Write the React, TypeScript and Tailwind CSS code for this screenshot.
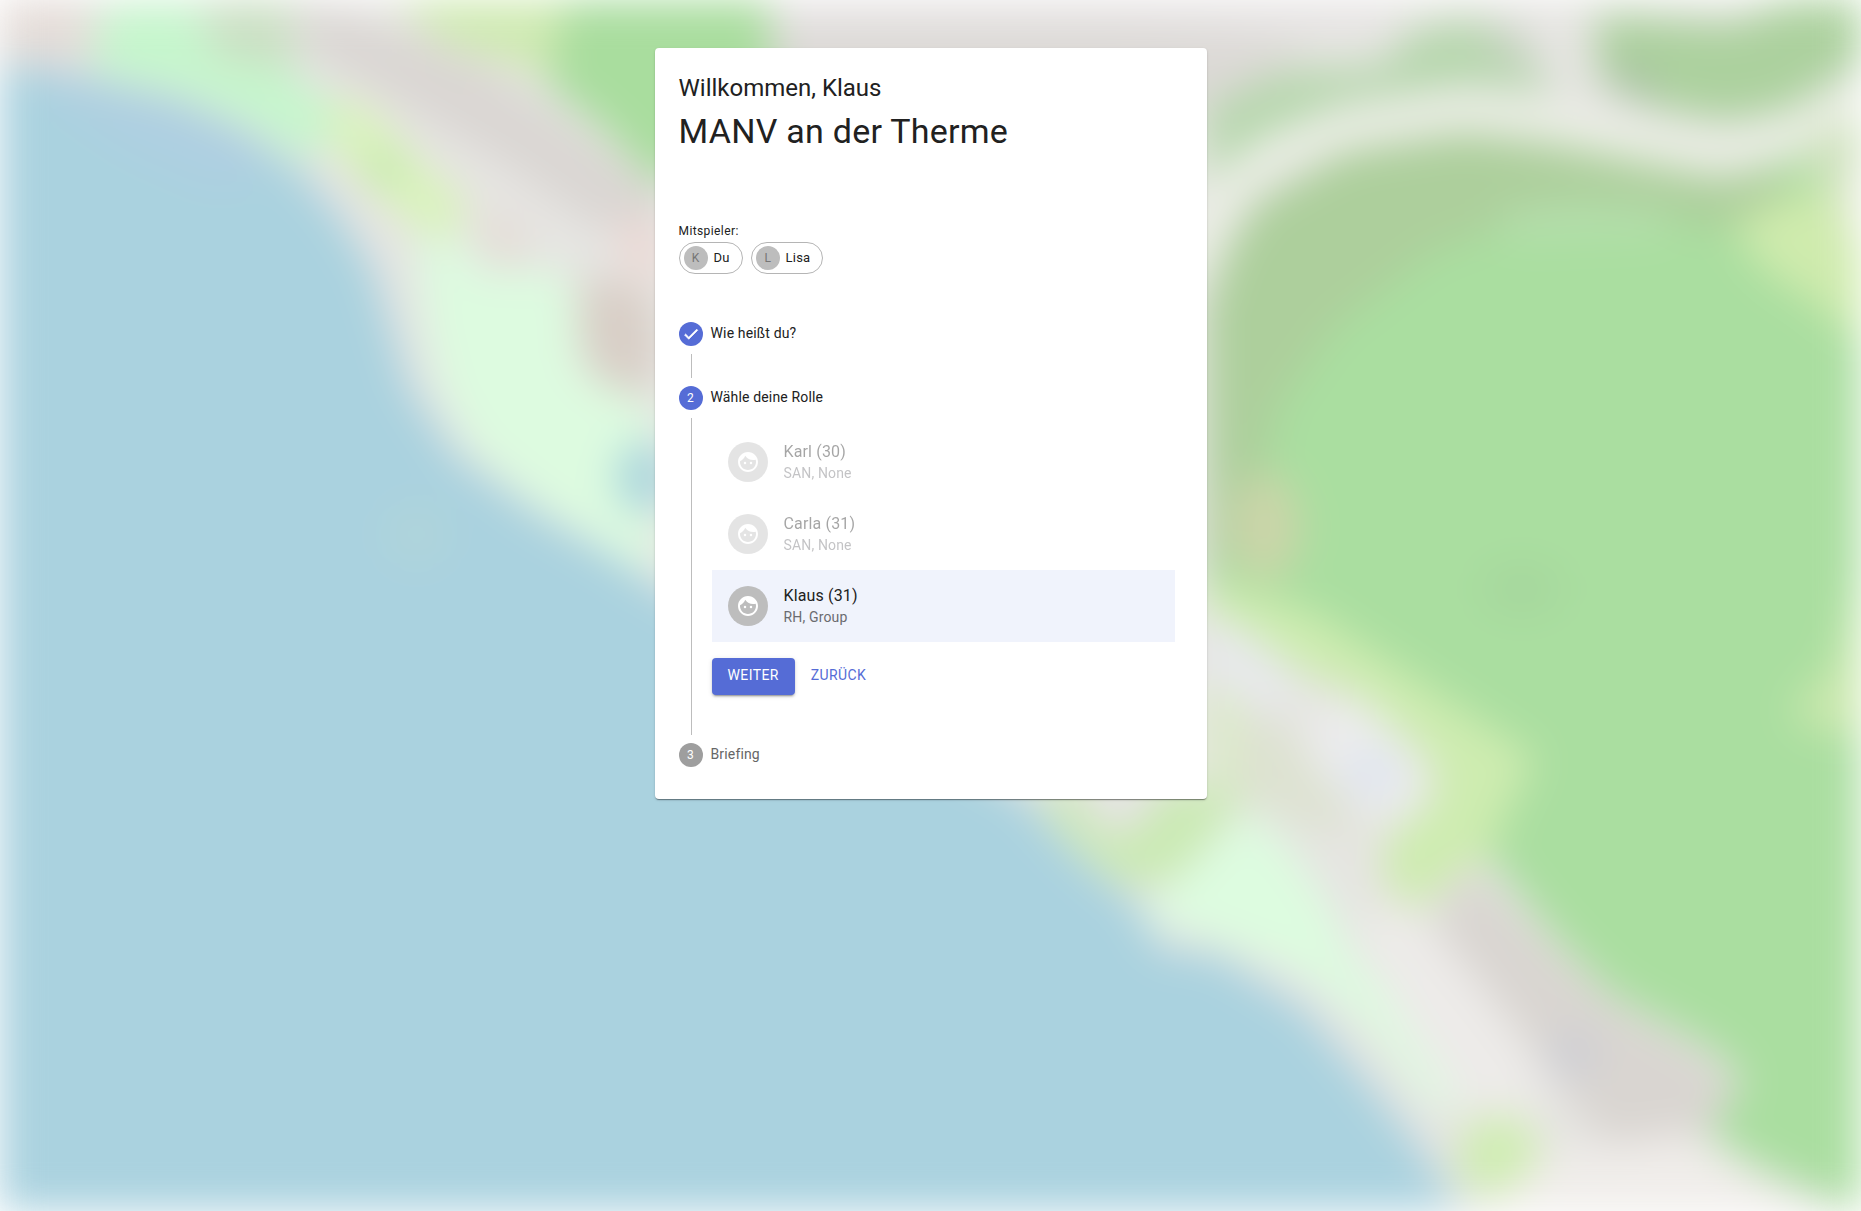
import { MdFace } from 'react-icons/md';

type Role = { name: string; detail: string; selected?: boolean };

const roles: Role[] = [
  { name: 'Karl (30)', detail: 'SAN, None' },
  { name: 'Carla (31)', detail: 'SAN, None' },
  { name: 'Klaus (31)', detail: 'RH, Group', selected: true },
];

function MapBackdrop() {
  return (
    <svg
      className="absolute inset-0 h-full w-full overflow-hidden blur-[20px]"
      viewBox="0 0 1568 1020"
      preserveAspectRatio="none"
      aria-hidden="true"
    >
      <rect width="1568" height="1020" fill="#e6e5e2" />
      {/* built-up area */}
      <path d="M0 0H75V52H0Z" fill="#e4dcd8" />
      <path d="M170 0H245L250 60L185 60Z" fill="#cbe0c4" />
      <path d="M250 0L330 25L400 52L552 155V205L500 190L425 138L345 92L262 45Z" fill="#dad6d3" />
      <path d="M520 180L552 190V245L530 225Z" fill="#efd6d2" />
      <path d="M650 20H880L1040 30L1110 40L1060 70L1010 100H650Z" fill="#dcd9d6" />
      <path d="M650 0H1170V24H650Z" fill="#e6e3e3" />
      <path d="M335 0H478L466 66L425 52L372 36Z" fill="#cfeab2" />
      <path d="M478 0H646L652 60L560 160L505 105L462 72Z" fill="#a9dd9e" />
      {/* water */}
      <path
        d="M0 54L75 65L150 87L212 115L254 145L286 182L315 228L330 278L345 327L384 384L454 434L522 473L552 494L862 672L906 720L958 764L978 800L1024 804L1098 850L1152 912L1196 967L1236 1030H0Z"
        fill="#aad2df"
      />
      <path d="M30 55L150 84L210 112L225 150L180 160L110 130L50 90Z" fill="#aecfe1" />
      <circle cx="351" cy="450" r="26" fill="#b0d4da" />
      {/* shore meadows */}
      <path d="M88 5L165 2L182 50L240 58L284 92L262 138L215 106L150 78L76 60Z" fill="#c6f6cd" />
      <path d="M275 80L312 92L352 135L395 172L376 205L338 182L284 130Z" fill="#d9f4bb" />
      <circle cx="324" cy="142" r="14" fill="#bfe6a6" />
      <path d="M349 196L365 205H395L402 228H480L490 312L552 345V488L450 422L398 378L371 328L359 276Z" fill="#ddfbe0" />
      <path d="M405 180L435 190L440 220L415 218Z" fill="#e4d8d0" />
      <path d="M490 235L530 238L552 260V328L515 328L490 300Z" fill="#d8cec6" />
      <ellipse cx="543" cy="402" rx="24" ry="30" fill="#abd6dd" />
      {/* woods */}
      <path d="M1017 90L1080 60L1165 55L1190 26L1238 16L1272 30L1302 66L1310 78L1234 72L1130 88L1060 118L1017 160Z" fill="#b7d7ae" />
      <path d="M1255 18L1285 28L1292 55L1260 50Z" fill="#c7d1c2" />
      <path d="M1345 12L1460 20L1510 0H1568V52L1508 92L1456 102L1392 90L1348 68Z" fill="#acd19e" />
      <path d="M1355 50L1395 55V88L1360 78Z" fill="#aac4a3" />
      <path
        d="M1024 510L1019 270L1034 210L1060 170L1134 128L1234 112L1310 122L1400 140L1450 150L1510 135L1568 105V1020L1484 984L1439 955L1469 910L1444 884L1359 838L1309 788L1254 721L1274 672L1294 640L1244 607L1184 568L1104 516Z"
        fill="#aadea0"
      />
      <path
        d="M1017 500V260L1034 210L1060 170L1134 128L1234 112L1310 122L1400 140L1450 150L1500 140L1510 165L1450 195L1400 180L1334 168L1264 192L1209 211L1124 276L1078 341L1060 410Z"
        fill="#adcf9c"
      />
      <path d="M1264 180L1310 172L1400 175L1410 196L1264 202Z" fill="#b5dfad" />
      <ellipse cx="1066" cy="444" rx="30" ry="46" fill="#cbd5a9" />
      <ellipse cx="1282" cy="496" rx="36" ry="22" fill="#a6d79d" />
      <path d="M1512 125L1568 95V178L1532 155Z" fill="#cfe2bd" />
      <path d="M1458 190L1508 164L1545 160L1568 200V290L1530 256L1490 230Z" fill="#cfebad" />
      <path d="M1548 170L1568 130V220Z" fill="#e9eadf" />
      <path d="M1568 480V620L1525 615L1508 598L1545 560Z" fill="#cae8ad" />
      {/* curved road */}
      <path
        d="M1004 230L1024 174C1036 155 1048 144 1064 134C1085 120 1110 113 1134 108C1165 100 1200 94 1234 94C1262 94 1285 97 1309 103L1384 120C1405 125 1425 128 1444 127C1465 126 1480 122 1494 116L1580 76"
        fill="none"
        stroke="#edf0e7"
        strokeWidth="28"
      />
      {/* promenade and allotments */}
      <path
        d="M1017 490L1060 500L1104 514L1184 566L1244 605L1294 638L1276 672L1254 721L1234 731L1189 770L1164 737L1169 705L1209 672L1204 640L1144 585L1094 565L1017 516Z"
        fill="#ceecb0"
      />
      <path d="M1017 516L1048 530L1094 565L1080 600L1017 570Z" fill="#e8e9ed" />
      <path d="M1017 600L1080 606L1144 690L1130 705L1060 680L1017 655Z" fill="#dde2d1" />
      <path d="M1017 570L1045 590L1040 660L1017 665Z" fill="#dbecc8" />
      <path d="M1104 596L1154 592L1208 652L1190 692L1154 690L1104 644Z" fill="#ececed" />
      <path d="M1130 640L1170 630L1178 665L1145 672Z" fill="#dde4f0" />
      <path d="M874 665H1050L1025 700L992 738L952 748L904 712Z" fill="#caeab3" />
      <path d="M908 655H976L966 692L940 704L918 690Z" fill="#e6e4e5" />
      <path d="M1052 682L1088 716L1120 762L1140 806L1240 915L1214 940L1150 862L1094 818L1014 788L960 772L996 736Z" fill="#ddfce0" />
      <path d="M1180 758L1140 780L1180 860L1250 960L1300 970L1290 890L1230 800Z" fill="#edebe9" />
      <path d="M1238 732L1309 800L1359 845L1440 894L1462 918L1430 958L1400 970L1350 960L1290 880L1208 780Z" fill="#d9d5d1" />
      <circle cx="1325" cy="888" r="20" fill="#cdced5" />
      <circle cx="1263" cy="974" r="35" fill="#cfedb2" />
      <path d="M1234 1030L1300 975L1420 955L1530 1020V1030Z" fill="#f0edea" />
    </svg>
  );
}

function StepBadge({ children, muted }: { children: React.ReactNode; muted?: boolean }) {
  return (
    <span
      className={
        muted
          ? 'flex size-6 items-center justify-center rounded-full bg-[#9e9e9e] text-xs text-white'
          : 'flex size-6 items-center justify-center rounded-full bg-[#556cd6] text-xs text-white'
      }
    >
      {children}
    </span>
  );
}

function Chip({ initial, label }: { initial: string; label: string }) {
  return (
    <div className="flex h-8 items-center rounded-full border border-[#b5b5b5] pr-3 pl-1">
      <span className="flex size-6 items-center justify-center rounded-full bg-[#bdbdbd] text-xs text-[#757575]">
        {initial}
      </span>
      <span className="ml-[6px] text-[13px] tracking-[0.2px]">{label}</span>
    </div>
  );
}

function RoleRow({ role }: { role: Role }) {
  return (
    <li className={role.selected ? 'flex h-[72px] items-center bg-[#f0f3fc] px-4' : 'flex h-[72px] items-center px-4 opacity-40'}>
      <span className="flex size-10 items-center justify-center rounded-full bg-[#bdbdbd] text-white">
        <MdFace className="size-6" />
      </span>
      <span className="ml-4 flex flex-col pb-px">
        <span className="text-base leading-6 tracking-[0.15px]">{role.name}</span>
        <span className="-mt-px text-sm leading-5 tracking-[0.15px] text-[#6b6b70]">{role.detail}</span>
      </span>
    </li>
  );
}

export default function App() {
  return (
    <div className="relative h-screen w-full overflow-hidden bg-white font-['Roboto',sans-serif] text-[#212121] antialiased">
      <MapBackdrop />
      <main className="relative mx-auto mt-12 flex h-[751px] w-[552px] flex-col rounded bg-white px-6 pt-6 shadow-[0_2px_1px_-1px_rgba(0,0,0,0.28),0_1px_1px_0_rgba(0,0,0,0.16),0_1px_3px_0_rgba(0,0,0,0.12)]">
        <h2 className="text-2xl leading-8">Willkommen, Klaus</h2>
        <h1 className="mt-[7px] text-[34px] leading-10 tracking-[0.25px]">MANV an der Therme</h1>

        <p className="mt-[70px] text-xs leading-5 tracking-[0.4px]">Mitspieler:</p>
        <div className="mt-px flex gap-2">
          <Chip initial="K" label="Du" />
          <Chip initial="L" label="Lisa" />
        </div>

        <ol className="mt-12 text-sm tracking-[0.15px]">
          <li>
            <div className="flex h-6 items-center gap-2">
              <StepBadge>
                <svg
                  className="size-[18px]"
                  viewBox="0 0 24 24"
                  fill="currentColor"
                  stroke="currentColor"
                  strokeWidth="0.9"
                >
                  <path d="M9 16.17 4.83 12l-1.42 1.41L9 19 21 7l-1.41-1.41z" />
                </svg>
              </StepBadge>
              <span className="pb-[2px]">Wie heißt du?</span>
            </div>
            <div className="my-2 ml-3 h-6 w-px bg-[#bdbdbd]" />
          </li>
          <li>
            <div className="flex h-6 items-center gap-2">
              <StepBadge>2</StepBadge>
              <span className="pb-[2px]">Wähle deine Rolle</span>
            </div>
            <div className="my-2 ml-3 flex h-[317px] border-l border-[#bdbdbd] pt-2 pl-5">
              <div className="w-[463px]">
                <ul>
                  {roles.map((role) => (
                    <RoleRow key={role.name} role={role} />
                  ))}
                </ul>
                <div className="mt-4 flex gap-4">
                  <button className="h-[37px] rounded bg-[#556cd6] px-4 pb-1 text-sm tracking-[0.4px] text-white shadow-[0_3px_1px_-2px_rgba(0,0,0,0.2),0_2px_2px_0_rgba(0,0,0,0.14),0_1px_5px_0_rgba(0,0,0,0.12)]">
                    WEITER
                  </button>
                  <button className="h-[37px] pb-1 text-sm tracking-[0.36px] text-[#556cd6]">ZURÜCK</button>
                </div>
              </div>
            </div>
          </li>
          <li className="flex h-6 items-center gap-2">
            <StepBadge muted>3</StepBadge>
            <span className="pb-[2px] text-[#666666]">Briefing</span>
          </li>
        </ol>
      </main>
    </div>
  );
}
